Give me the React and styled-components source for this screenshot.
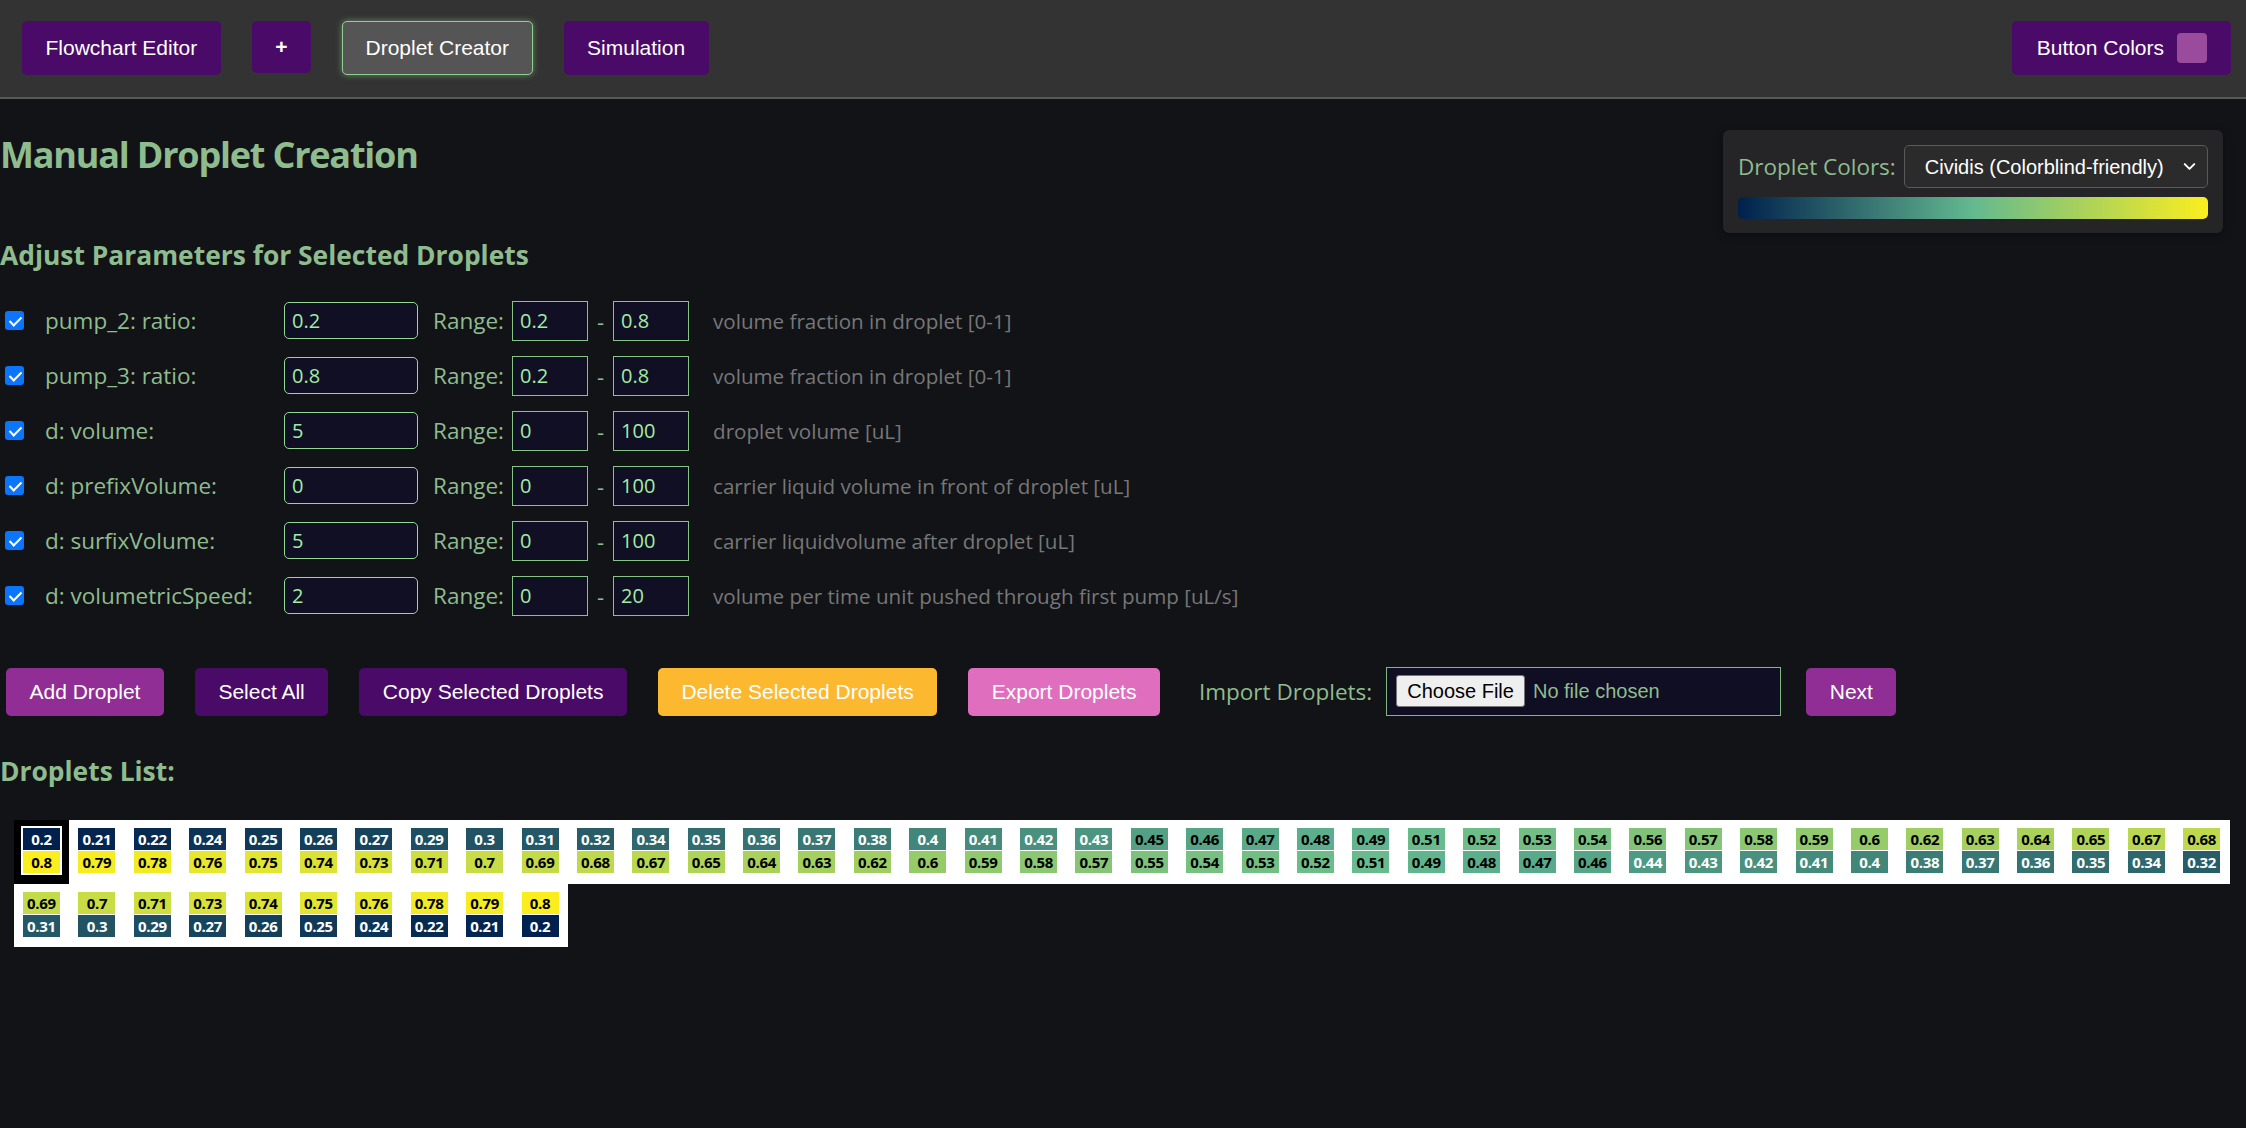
import React from "react";
import styled, { createGlobalStyle } from "styled-components";
import { ChevronDown } from "lucide-react";

const SANS = `"Liberation Sans", Arial, sans-serif`;
const UI = `"Open Sans", "Noto Sans", sans-serif`;
const GREEN = "#8fbc8f";

const GlobalStyle = createGlobalStyle`
  * { box-sizing: border-box; }
  body {
    margin: 0;
    background: #121317;
    font-family: ${UI};
  }
`;

// Header
const Header = styled.header`
  height: 99px;
  background: #333333;
  border-bottom: 2px solid #585858;
  display: flex;
  justify-content: space-between;
  align-items: flex-start;
  padding: 21px 15px 0 22px;
`;

const NavGroup = styled.nav`
  display: flex;
  align-items: flex-start;
  gap: 31px;
`;

const NavButton = styled.button`
  font-family: ${SANS};
  font-size: 21px;
  line-height: 24px;
  color: #fff;
  padding: 14px 22.5px;
  border-radius: 5px;
  border: 1px solid ${(p) => (p.$active ? "#8fd08f" : "transparent")};
  background: ${(p) => (p.$active ? "#555555" : "#4a0b68")};
  box-shadow: ${(p) => (p.$active ? "0 0 6px rgba(143, 208, 143, 0.55)" : "none")};
  cursor: pointer;
`;

const PlusButton = styled(NavButton)`
  font-weight: 700;
  line-height: 22px;
`;

const ColorsButton = styled(NavButton)`
  display: flex;
  align-items: center;
  gap: 13px;
  height: 54px;
  padding: 0 23px 0 24px;
`;

const Swatch = styled.span`
  width: 30px;
  height: 30px;
  border-radius: 4px;
  background: ${(p) => p.$color};
`;

// Top section
const Main = styled.main`
  color: ${GREEN};
`;

const TopRow = styled.div`
  display: flex;
  justify-content: space-between;
  align-items: flex-start;
`;

const Title = styled.h1`
  margin: 34px 0 0;
  font-size: 36px;
  line-height: 44px;
  font-weight: 700;
  letter-spacing: -1.2px;
  color: ${GREEN};
`;

const ColorPanel = styled.div`
  margin: 31px 23px 0 0;
  width: 500px;
  padding: 15px 15px 14px;
  background: #252527;
  border-radius: 6px;
  box-shadow: 0 2px 8px rgba(0, 0, 0, 0.35);
`;

const PanelRow = styled.div`
  display: flex;
  align-items: center;
  gap: 8px;
`;

const PanelLabel = styled.label`
  font-size: 22.5px;
  color: ${GREEN};
  white-space: nowrap;
`;

const SelectWrap = styled.div`
  position: relative;
  flex: 1;
`;

const Select = styled.select`
  appearance: none;
  width: 100%;
  height: 43px;
  padding: 0 30px 0 20px;
  font-family: ${SANS};
  font-size: 20px;
  color: #fff;
  background: #2b2b2b;
  border: 1px solid #5a5a5a;
  border-radius: 5px;
`;

const SelectChevron = styled(ChevronDown)`
  position: absolute;
  right: 9px;
  top: 12px;
  pointer-events: none;
  color: #fff;
`;

const GradientBar = styled.div`
  margin-top: 9px;
  height: 22px;
  border-radius: 5px;
  background: linear-gradient(to right, #00204d, #63b990, #fbee1f);
`;

const SectionTitle = styled.h2`
  margin: ${(p) => p.$top}px 0 0;
  font-size: 26.4px;
  line-height: 32px;
  font-weight: 700;
  color: ${GREEN};
`;

// Parameter rows
const ParamList = styled.div`
  margin-top: 22px;
`;

const ParamRow = styled.div`
  height: 55px;
  display: flex;
  align-items: center;
`;

const Check = styled.input`
  appearance: none;
  flex: none;
  width: 19px;
  height: 19px;
  margin: 0 21px 0 5px;
  border-radius: 3px;
  background: #0b75fb;
  position: relative;
  &::after {
    content: "";
    position: absolute;
    left: 6.5px;
    top: 2.5px;
    width: 5px;
    height: 10px;
    border: solid #fff;
    border-width: 0 2.5px 2.5px 0;
    transform: rotate(45deg);
  }
`;

const ParamLabel = styled.label`
  width: 239px;
  font-size: 22.5px;
  color: ${GREEN};
`;

const Field = styled.input`
  width: ${(p) => (p.$range ? 76 : 134)}px;
  height: ${(p) => (p.$range ? 40 : 37)}px;
  padding: 0 7px;
  font-family: ${UI};
  font-size: 20px;
  color: #a3eca3;
  background: #100f24;
  border: 1px solid ${(p) => (p.$range ? "#86c486" : "#93d893")};
  border-radius: ${(p) => (p.$range ? 0 : 5)}px;
  outline: none;
`;

const RangeLabel = styled.span`
  margin: 0 8px 0 15px;
  font-size: 22.5px;
  color: ${GREEN};
`;

const Dash = styled.span`
  margin: 0 9px;
  font-size: 22px;
  color: ${GREEN};
`;

const Description = styled.span`
  margin-left: 24px;
  font-size: 20.6px;
  color: #777;
`;

// Actions
const ActionBar = styled.div`
  margin-top: 44px;
  padding-left: 6px;
  display: flex;
  align-items: center;
  gap: 31px;
`;

const ActionButton = styled.button`
  font-family: ${SANS};
  font-size: 21px;
  line-height: 24px;
  color: #fff;
  padding: 12px 23.5px;
  border: none;
  border-radius: 5px;
  background: ${(p) => p.$bg};
  cursor: pointer;
`;

const ImportGroup = styled.div`
  display: flex;
  align-items: center;
  gap: 14px;
  margin: 0 -6px 0 8px;
`;

const ImportLabel = styled.label`
  font-size: 22.5px;
  color: ${GREEN};
`;

const FileInput = styled.input`
  width: 395px;
  height: 49px;
  padding: 7px 9px;
  font-family: ${SANS};
  font-size: 20px;
  color: ${GREEN};
  background: #100e22;
  border: 1px solid #7fb87f;
  &::file-selector-button {
    height: 32px;
    margin-right: 8px;
    padding: 0 10px;
    font-family: ${SANS};
    font-size: 20px;
    color: #000;
    background: #efefef;
    border: 1px solid #767676;
    border-radius: 3px;
  }
`;

// Droplets
const DropletGrid = styled.div`
  margin: 33px 0 0 14px;
  display: flex;
  flex-wrap: wrap;
`;

const DropletItem = styled.div`
  width: 55.4px;
  height: 63.5px;
  padding: 6px 0 0 7px;
  background: ${(p) => (p.$selected ? "#000" : "#fff")};
`;

const DropletBody = styled.div`
  width: 41px;
  display: flex;
  flex-direction: column;
  gap: 1px;
  border: 2px solid #fff;
  background: #fff;
`;

const Chip = styled.div`
  height: 22px;
  font-size: 15px;
  font-weight: 700;
  line-height: 22px;
  letter-spacing: -0.3px;
  text-align: center;
  color: ${(p) => (p.$dark ? "#000" : "#fff")};
`;

const STOPS = [
  [0, [0, 32, 77]],
  [0.5, [99, 185, 144]],
  [1, [251, 238, 31]],
];

function cividis(t) {
  const x = Math.min(1, Math.max(0, t));
  const i = x <= 0.5 ? 0 : 1;
  const [t0, c0] = STOPS[i];
  const [t1, c1] = STOPS[i + 1];
  const f = (x - t0) / (t1 - t0);
  const c = c0.map((v, k) => Math.round(v + (c1[k] - v) * f));
  return `rgb(${c.join(",")})`;
}

const TOPS = [
  0.2, 0.21, 0.22, 0.24, 0.25, 0.26, 0.27, 0.29, 0.3, 0.31, 0.32, 0.34, 0.35,
  0.36, 0.37, 0.38, 0.4, 0.41, 0.42, 0.43, 0.45, 0.46, 0.47, 0.48, 0.49, 0.51,
  0.52, 0.53, 0.54, 0.56, 0.57, 0.58, 0.59, 0.6, 0.62, 0.63, 0.64, 0.65, 0.67,
  0.68, 0.69, 0.7, 0.71, 0.73, 0.74, 0.75, 0.76, 0.78, 0.79, 0.8,
];

const BOTTOMS = [
  0.8, 0.79, 0.78, 0.76, 0.75, 0.74, 0.73, 0.71, 0.7, 0.69, 0.68, 0.67, 0.65,
  0.64, 0.63, 0.62, 0.6, 0.59, 0.58, 0.57, 0.55, 0.54, 0.53, 0.52, 0.51, 0.49,
  0.48, 0.47, 0.46, 0.44, 0.43, 0.42, 0.41, 0.4, 0.38, 0.37, 0.36, 0.35, 0.34,
  0.32, 0.31, 0.3, 0.29, 0.27, 0.26, 0.25, 0.24, 0.22, 0.21, 0.2,
];

const PARAMS = [
  { label: "pump_2: ratio:", value: "0.2", min: "0.2", max: "0.8", desc: "volume fraction in droplet [0-1]" },
  { label: "pump_3: ratio:", value: "0.8", min: "0.2", max: "0.8", desc: "volume fraction in droplet [0-1]" },
  { label: "d: volume:", value: "5", min: "0", max: "100", desc: "droplet volume [uL]" },
  { label: "d: prefixVolume:", value: "0", min: "0", max: "100", desc: "carrier liquid volume in front of droplet [uL]" },
  { label: "d: surfixVolume:", value: "5", min: "0", max: "100", desc: "carrier liquidvolume after droplet [uL]" },
  { label: "d: volumetricSpeed:", value: "2", min: "0", max: "20", desc: "volume per time unit pushed through first pump [uL/s]" },
];

const DropletChip = ({ value }) => {
  const t = (value - 0.2) / 0.6;
  return (
    <Chip $dark={t > 0.41} style={{ background: cividis(t) }}>
      {value}
    </Chip>
  );
};

const App = () => {
  return (
    <>
      <GlobalStyle />
      <Header>
        <NavGroup>
          <NavButton>Flowchart Editor</NavButton>
          <PlusButton>+</PlusButton>
          <NavButton $active>Droplet Creator</NavButton>
          <NavButton>Simulation</NavButton>
        </NavGroup>
        <ColorsButton>
          Button Colors
          <Swatch $color="#9b4b9b" />
        </ColorsButton>
      </Header>

      <Main>
        <TopRow>
          <Title>Manual Droplet Creation</Title>
          <ColorPanel>
            <PanelRow>
              <PanelLabel>Droplet Colors:</PanelLabel>
              <SelectWrap>
                <Select defaultValue="cividis">
                  <option value="cividis">Cividis (Colorblind-friendly)</option>
                  <option value="viridis">Viridis</option>
                </Select>
                <SelectChevron size={19} strokeWidth={2.5} />
              </SelectWrap>
            </PanelRow>
            <GradientBar />
          </ColorPanel>
        </TopRow>

        <SectionTitle $top={6}>Adjust Parameters for Selected Droplets</SectionTitle>
        <ParamList>
          {PARAMS.map((p) => (
            <ParamRow key={p.label}>
              <Check type="checkbox" defaultChecked />
              <ParamLabel>{p.label}</ParamLabel>
              <Field defaultValue={p.value} />
              <RangeLabel>Range:</RangeLabel>
              <Field $range defaultValue={p.min} />
              <Dash>-</Dash>
              <Field $range defaultValue={p.max} />
              <Description>{p.desc}</Description>
            </ParamRow>
          ))}
        </ParamList>

        <ActionBar>
          <ActionButton $bg="#912e95">Add Droplet</ActionButton>
          <ActionButton $bg="#4a0b68">Select All</ActionButton>
          <ActionButton $bg="#4a0b68">Copy Selected Droplets</ActionButton>
          <ActionButton $bg="#fcb930">Delete Selected Droplets</ActionButton>
          <ActionButton $bg="#df6fbe">Export Droplets</ActionButton>
          <ImportGroup>
            <ImportLabel>Import Droplets:</ImportLabel>
            <FileInput type="file" accept=".json" />
          </ImportGroup>
          <ActionButton $bg="#912e95">Next</ActionButton>
        </ActionBar>

        <SectionTitle $top={39}>Droplets List:</SectionTitle>
        <DropletGrid>
          {TOPS.map((top, i) => (
            <DropletItem key={i} $selected={i === 0}>
              <DropletBody>
                <DropletChip value={top} />
                <DropletChip value={BOTTOMS[i]} />
              </DropletBody>
            </DropletItem>
          ))}
        </DropletGrid>
      </Main>
    </>
  );
};

export default App;
